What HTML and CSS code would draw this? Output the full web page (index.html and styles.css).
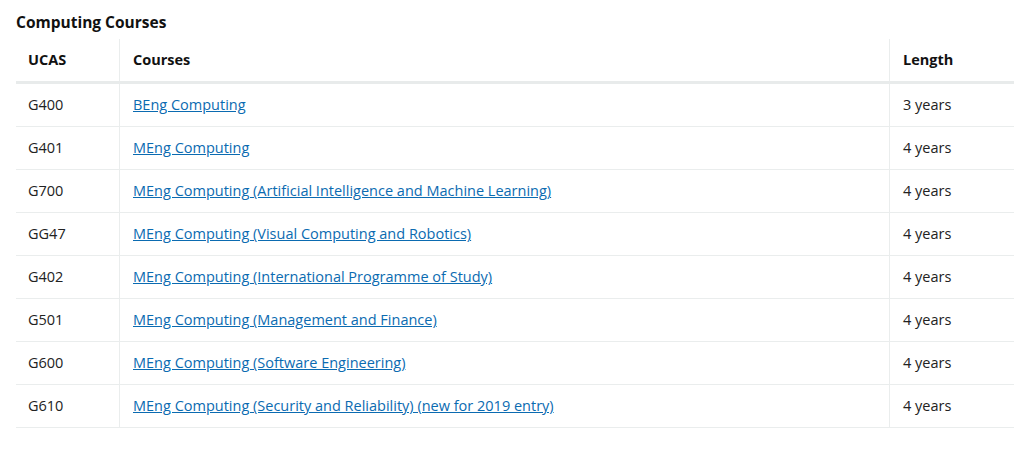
FILE: index.html
```html
<!DOCTYPE html>
<html>
<head>
<meta charset="utf-8">
<link rel="stylesheet" href="styles.css">
</head>
<body>
<h2 class="title">Computing Courses</h2>
<table class="courses">
  <thead>
    <tr><th class="c-ucas">UCAS</th><th class="c-course">Courses</th><th class="c-len">Length</th></tr>
  </thead>
  <tbody>
    <tr><td>G400</td><td><a href="#">BEng Computing</a></td><td>3 years</td></tr>
    <tr><td>G401</td><td><a href="#">MEng Computing</a></td><td>4 years</td></tr>
    <tr><td>G700</td><td><a href="#">MEng Computing (Artificial Intelligence and Machine Learning)</a></td><td>4 years</td></tr>
    <tr><td>GG47</td><td><a href="#">MEng Computing (Visual Computing and Robotics)</a></td><td>4 years</td></tr>
    <tr><td>G402</td><td><a href="#">MEng Computing (International Programme of Study)</a></td><td>4 years</td></tr>
    <tr><td>G501</td><td><a href="#">MEng Computing (Management and Finance)</a></td><td>4 years</td></tr>
    <tr><td>G600</td><td><a href="#">MEng Computing (Software Engineering)</a></td><td>4 years</td></tr>
    <tr><td>G610</td><td><a href="#">MEng Computing (Security and Reliability) (new for 2019 entry)</a></td><td>4 years</td></tr>
  </tbody>
</table>
</body>
</html>
```
FILE: styles.css
```css
body {
  margin: 0;
  padding: 0 14px 0 16px;
  font-family: "Open Sans", "Noto Sans", sans-serif;
  color: #1a1a1a;
  background: #fff;
}
.title {
  margin: 0;
  padding-top: 11px;
  height: 28px;
  font-size: 15.5px;
  line-height: 22px;
  font-weight: 700;
  color: #111;
}
.courses {
  width: 998px;
  border-collapse: collapse;
  font-size: 14.5px;
  table-layout: fixed;
}
.courses th, .courses td {
  padding: 0 12px;
  text-align: left;
  line-height: 20px;
}
.courses th + th, .courses td + td {
  padding-left: 13px;
  border-left: 1px solid #eaeded;
}
.courses th {
  height: 42px;
  font-weight: 700;
  color: #111;
  border-bottom: 3px solid #e8ebeb;
}
.courses td {
  height: 42px;
  border-bottom: 1px solid #eaeded;
  color: #222;
}
.c-ucas { width: 79px; }
.c-len { width: 99px; }
.courses a {
  color: #0b6bb1;
  text-decoration: underline;
}
```
